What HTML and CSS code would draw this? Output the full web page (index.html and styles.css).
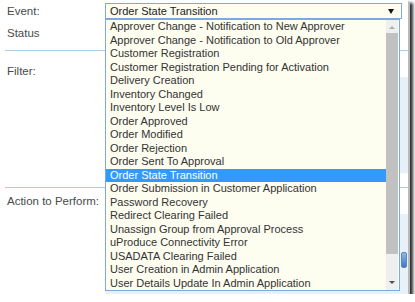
FILE: index.html
```html
<!DOCTYPE html>
<html>
<head>
<meta charset="utf-8">
<link rel="stylesheet" href="styles.css">
</head>
<body>
<div class="frame">
  <div class="section first">
    <div class="row event"><span class="label">Event:</span></div>
    <div class="row status"><span class="label">Status</span></div>
  </div>
  <div class="section filter">
    <span class="label">Filter:</span>
    <div class="panel filter-panel"><div class="textbox"></div></div>
  </div>
  <div class="section action">
    <span class="label">Action to Perform:</span>
    <div class="panel action-panel"><div class="btn"></div></div>
  </div>

  <div class="select">
    <span class="select-text">Order State Transition</span>
    <span class="select-arrow"></span>
  </div>
  <div class="listbox">
    <ul class="options">
      <li>Approver Change - Notification to New Approver</li>
      <li>Approver Change - Notification to Old Approver</li>
      <li>Customer Registration</li>
      <li>Customer Registration Pending for Activation</li>
      <li>Delivery Creation</li>
      <li>Inventory Changed</li>
      <li>Inventory Level Is Low</li>
      <li>Order Approved</li>
      <li>Order Modified</li>
      <li>Order Rejection</li>
      <li>Order Sent To Approval</li>
      <li class="selected">Order State Transition</li>
      <li>Order Submission in Customer Application</li>
      <li>Password Recovery</li>
      <li>Redirect Clearing Failed</li>
      <li>Unassign Group from Approval Process</li>
      <li>uProduce Connectivity Error</li>
      <li>USADATA Clearing Failed</li>
      <li>User Creation in Admin Application</li>
      <li>User Details Update In Admin Application</li>
    </ul>
    <div class="scrollbar">
      <span class="arrow up"></span>
      <div class="thumb"></div>
      <span class="arrow down"></span>
    </div>
  </div>
</div>
</body>
</html>
```

FILE: styles.css
```css
* { box-sizing: border-box; }
html, body { margin: 0; padding: 0; background: #ffffff; }
body { font-family: "Liberation Sans", Arial, sans-serif; }

.frame {
  position: relative;
  width: 408px;
  height: 294px;
  background: #ffffff;
  padding-left: 5px;
  overflow: hidden;
  box-shadow: 2px 2px 0 0 #b8b8b8, 4px 4px 3px 1px #2a2a2a;
}

.label {
  font-size: 11.5px;
  color: #4a4a4a;
  padding-left: 2px;
  white-space: nowrap;
}

.section { display: flex; }
.section.first {
  flex-direction: column;
  height: 51px;
  border-bottom: 1px solid #a9d0ea;
}
.row { display: flex; align-items: center; }
.row.event { height: 22px; }
.row.status { height: 21px; }

.section.filter {
  height: 137px;
  border-bottom: 1px solid #a9d0ea;
}
.section.filter .label { padding-top: 13px; line-height: 14px; width: 100px; flex: none; }
.filter-panel {
  margin-top: 26px;
  height: 96px;
  flex: 1;
  background: #e6f0f7;
  display: flex;
  align-items: center;
  justify-content: flex-end;
  padding-right: 8px;
}
.textbox {
  width: 295px;
  height: 88px;
  border-right: 2px solid #8fb6e0;
}

.section.action { height: 107px; }
.section.action .label { padding-top: 6px; line-height: 14px; width: 100px; flex: none; }
.action-panel {
  margin-top: 25px;
  flex: 1;
  height: 90px;
  background: #e8f1f8;
  border-top: 1px solid #ffffff;
  position: relative;
}
.btn {
  position: absolute;
  left: 296px;
  top: 38px;
  width: 6px;
  height: 16px;
  border-radius: 2px;
  background: linear-gradient(#8fb8e6, #3c78c0);
  border: 1px solid #5a88c0;
}

/* dropdown overlay */
.select {
  position: absolute;
  left: 105px;
  top: 3px;
  width: 297px;
  height: 16px;
  border: 1px solid #7fa8dc;
  background: #fdfdf0;
  display: flex;
  align-items: center;
  padding-left: 4px;
}
.select-text {
  font-size: 11px;
  color: #222;
  flex: 1;
}
.select-arrow {
  width: 0; height: 0;
  border-left: 3px solid transparent;
  border-right: 3px solid transparent;
  border-top: 5px solid #111;
  margin-right: 7px;
}

.listbox {
  position: absolute;
  left: 105px;
  top: 19px;
  width: 295px;
  height: 272px;
  border: 1px solid #7fa8dc;
  background: #fdfdf0;
  display: flex;
}
.options {
  list-style: none;
  margin: 0;
  padding: 0;
  flex: 1;
  font-size: 11px;
  color: #333;
}
.options li {
  height: 13.5px;
  line-height: 13.5px;
  padding-left: 4px;
  white-space: nowrap;
}
.options li.selected {
  background: #3399ff;
  color: #ffffff;
}
.scrollbar {
  width: 12px;
  background: #efefef;
  display: flex;
  flex-direction: column;
  align-items: center;
  margin-right: 1px;
}
.arrow { width: 0; height: 0; flex: none; }
.arrow.up {
  margin-top: 6px;
  border-left: 3px solid transparent;
  border-right: 3px solid transparent;
  border-bottom: 3px solid #b0b0b0;
}
.arrow.down {
  margin-top: auto;
  margin-bottom: 6px;
  border-left: 3px solid transparent;
  border-right: 3px solid transparent;
  border-top: 3px solid #505050;
}
.thumb {
  margin-top: 4px;
  width: 12px;
  height: 221px;
  background: #c1c1c1;
}
```
